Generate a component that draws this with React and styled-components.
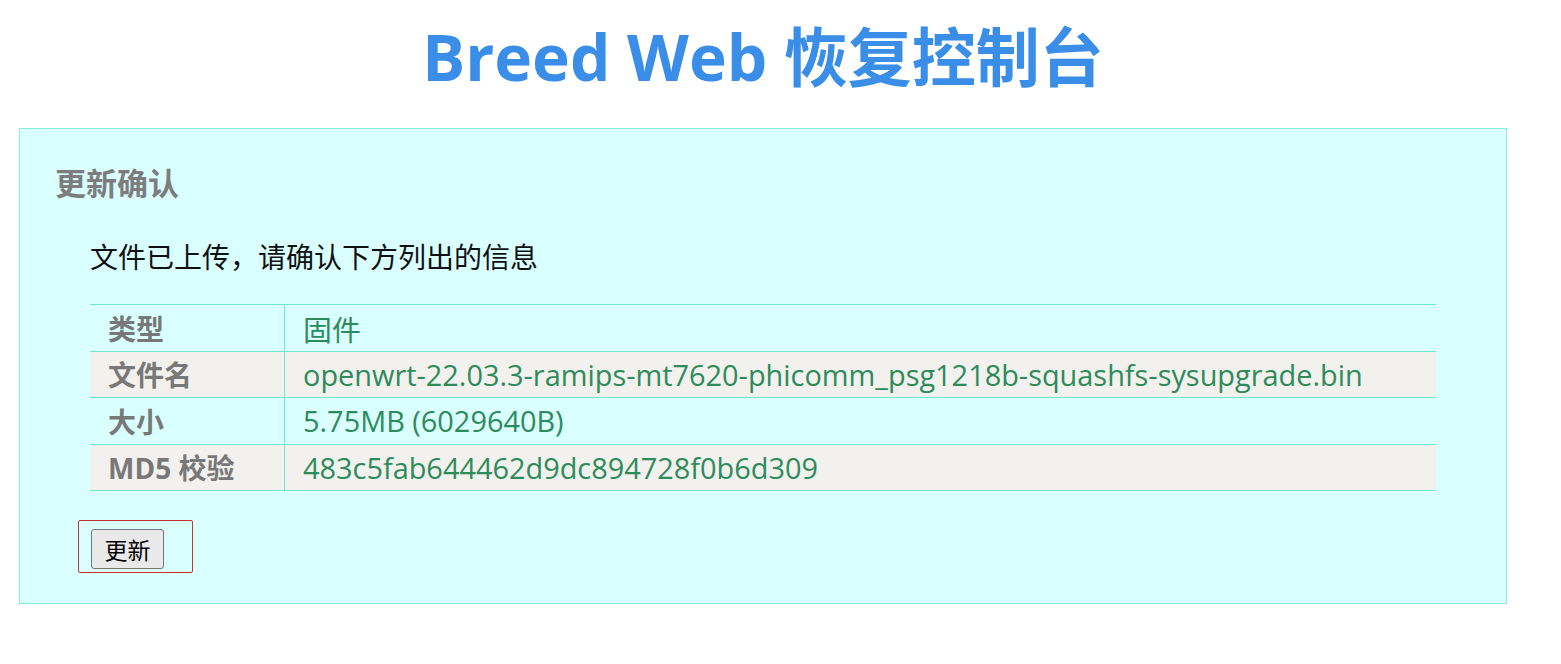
import React from "react";
import styled, { createGlobalStyle } from "styled-components";

const Global = createGlobalStyle`
  html, body { margin: 0; padding: 0; background: #ffffff; }
  body { font-family: "Open Sans", "Noto Sans CJK SC", sans-serif; }
`;

const Page = styled.div`
  width: 1510px;
  margin-left: 8px;
`;

const Title = styled.h1`
  margin: 0;
  height: 114px;
  line-height: 114px;
  text-align: center;
  font-size: 64px;
  font-weight: 700;
  color: #3a8ee8;
`;

const Panel = styled.section`
  margin: 14px 11px 0;
  border: 1px solid #86ecdc;
  background: #d9ffff;
  padding: 0 35px 30px;
`;

const Heading = styled.h3`
  margin: 34px 0 0;
  line-height: 40px;
  font-size: 31px;
  font-weight: 700;
  color: #7d7d7d;
`;

const Body = styled.div`
  padding: 0 35px;
`;

const Intro = styled.p`
  margin: 34px 0 0;
  line-height: 40px;
  font-size: 28px;
  color: #111;
`;

const Table = styled.table`
  margin-top: 27px;
  width: 100%;
  border-collapse: collapse;
  border-top: 1px solid #70e6cc;
`;

const Row = styled.tr`
  background: ${(p) => (p.$alt ? "#f3f1ee" : "transparent")};
  border-bottom: 1px solid #70e6cc;
`;

const Label = styled.td`
  width: 176px;
  padding: 0 0 0 18px;
  height: 45.5px;
  font-size: 28px;
  font-weight: 700;
  color: #787878;
  border-right: 1px solid #70e6cc;
  white-space: nowrap;
`;

const Value = styled.td`
  padding: 0 0 0 18px;
  height: 45.5px;
  font-size: 28.9px;
  color: #2e8b5c;
  white-space: nowrap;
`;

const Form = styled.form`
  display: inline-flex;
  margin: 29px 0 0 -12px;
  width: 115px;
  height: 53px;
  box-sizing: border-box;
  padding: 8px 12px;
  border: 1px solid #c8302a;
  border-radius: 2px;
`;

const Button = styled.button`
  width: 73px;
  height: 40px;
  padding: 0;
  font-family: "Noto Sans CJK SC", sans-serif;
  font-size: 23px;
  color: #000;
  background: #e9e9e9;
  border: 1px solid #767676;
  border-radius: 3px;
`;

const rows = [
  ["类型", "固件"],
  ["文件名", "openwrt-22.03.3-ramips-mt7620-phicomm_psg1218b-squashfs-sysupgrade.bin"],
  ["大小", "5.75MB (6029640B)"],
  ["MD5 校验", "483c5fab644462d9dc894728f0b6d309"],
];

export default function App() {
  return (
    <>
      <Global />
      <Page>
        <Title>Breed Web 恢复控制台</Title>
        <Panel>
          <Heading>更新确认</Heading>
          <Body>
            <Intro>文件已上传，请确认下方列出的信息</Intro>
            <Table>
              <tbody>
                {rows.map(([k, v], i) => (
                  <Row key={k} $alt={i % 2 === 1}>
                    <Label>{k}</Label>
                    <Value>{v}</Value>
                  </Row>
                ))}
              </tbody>
            </Table>
            <Form onSubmit={(e) => e.preventDefault()}>
              <Button type="submit">更新</Button>
            </Form>
          </Body>
        </Panel>
      </Page>
    </>
  );
}
